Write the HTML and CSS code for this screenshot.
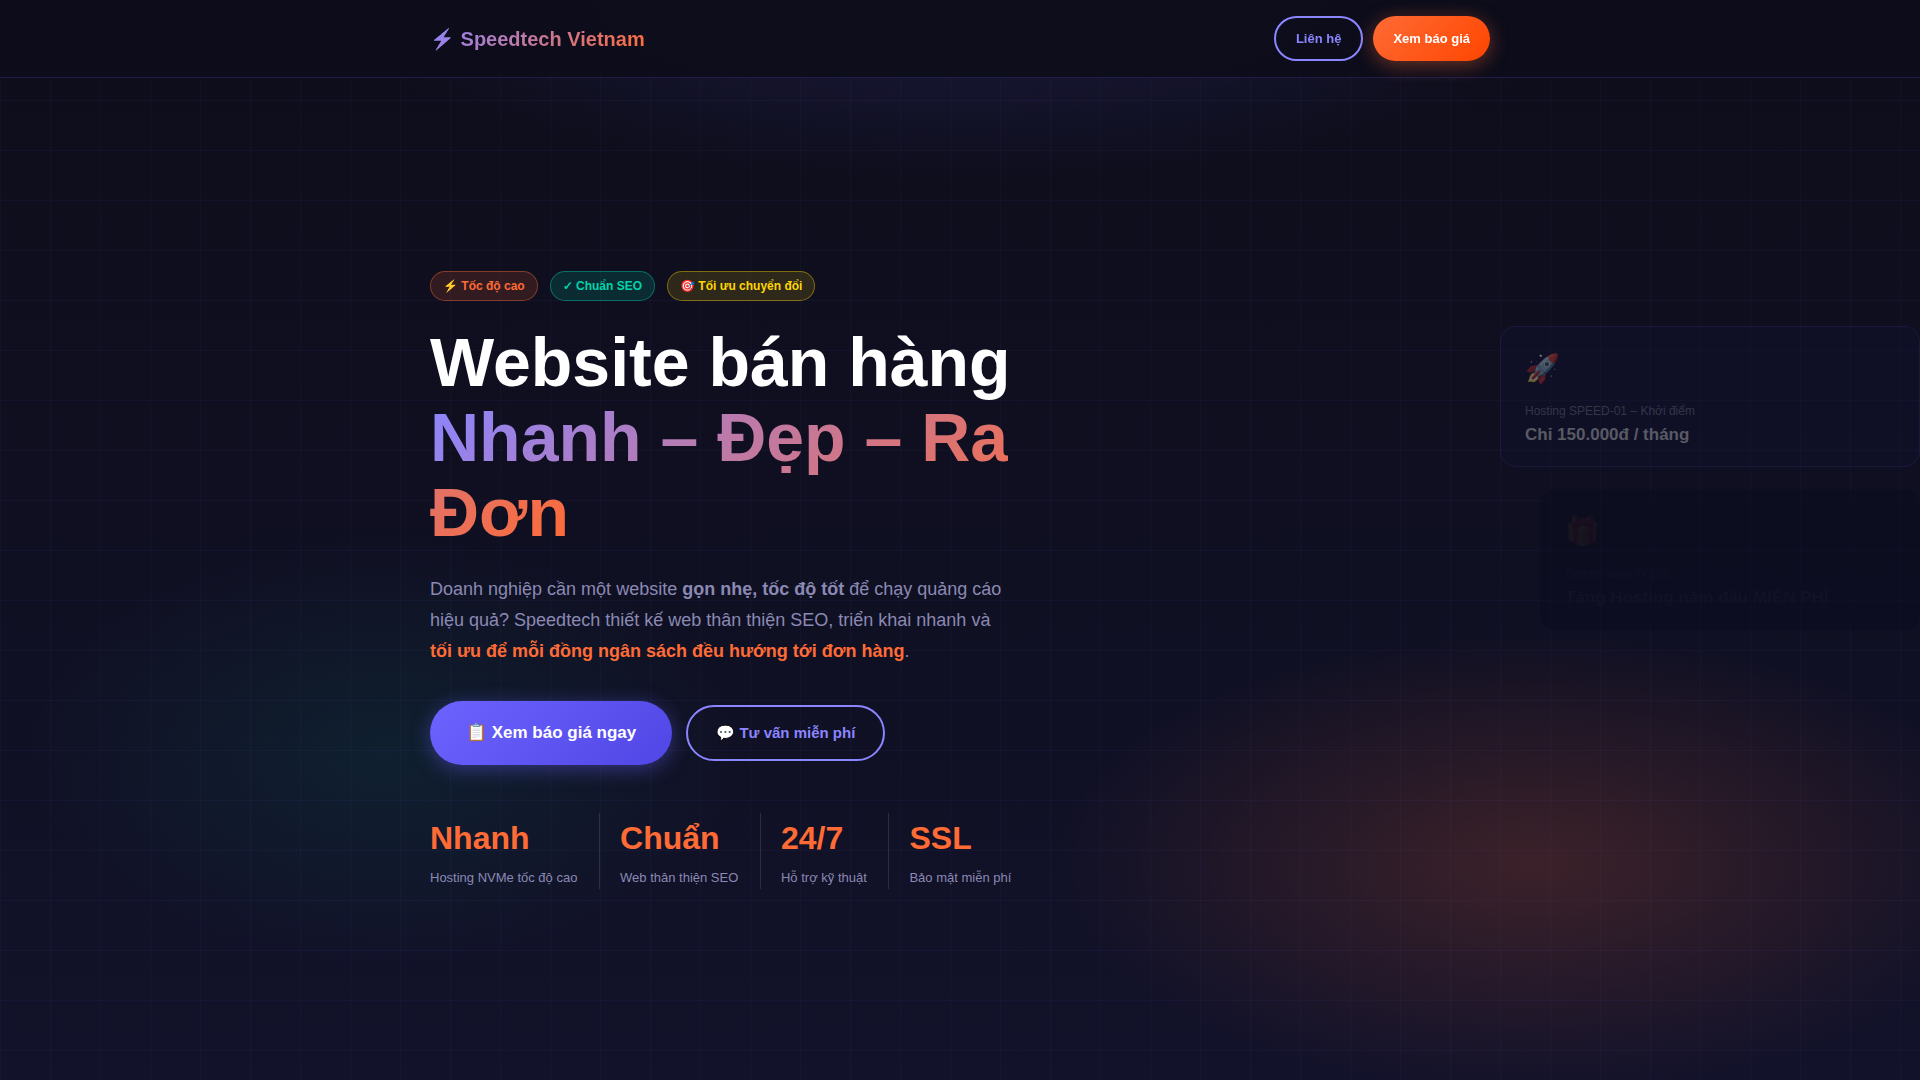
FILE: index.html
```
<!DOCTYPE html>
<html lang="vi">
<head>
  <meta charset="UTF-8">
  <meta name="viewport" content="width=device-width, initial-scale=1.0">
  <title>Speedtech Vietnam</title>
  <link rel="stylesheet" href="styles.css">
</head>
<body>
  <header class="header">
    <div class="container header-inner">
      <a href="#" class="logo">⚡ Speedtech Vietnam</a>
      <nav class="header-cta">
        <a href="#contact" class="btn btn-outline btn-sm">Liên hệ</a>
        <a href="#pricing" class="btn btn-orange btn-sm">Xem báo giá</a>
      </nav>
    </div>
  </header>

  <section class="hero">
    <div class="container hero-grid">
      <div class="hero-content">
        <div class="badges">
          <span class="badge badge-orange">⚡ Tốc độ cao</span>
          <span class="badge badge-green">✓ Chuẩn SEO</span>
          <span class="badge badge-yellow">🎯 Tối ưu chuyển đổi</span>
        </div>
        <h1>Website bán hàng <br><span class="gradient-text">Nhanh – Đẹp – Ra Đơn</span></h1>
        <p class="hero-desc">Doanh nghiệp cần một website <strong>gọn nhẹ, tốc độ tốt</strong> để chạy quảng cáo hiệu quả? Speedtech thiết kế web thân thiện SEO, triển khai nhanh và <strong class="highlight">tối ưu để mỗi đồng ngân sách đều hướng tới đơn hàng</strong>.</p>
        <div class="hero-buttons">
          <a href="#pricing" class="btn btn-primary btn-lg">📋 Xem báo giá ngay</a>
          <a href="#contact" class="btn btn-outline">💬 Tư vấn miễn phí</a>
        </div>
        <div class="stats">
          <div class="stat">
            <div class="stat-value">Nhanh</div>
            <div class="stat-label">Hosting NVMe tốc độ cao</div>
          </div>
          <div class="stat">
            <div class="stat-value">Chuẩn</div>
            <div class="stat-label">Web thân thiện SEO</div>
          </div>
          <div class="stat">
            <div class="stat-value">24/7</div>
            <div class="stat-label">Hỗ trợ kỹ thuật</div>
          </div>
          <div class="stat">
            <div class="stat-value">SSL</div>
            <div class="stat-label">Bảo mật miễn phí</div>
          </div>
        </div>
      </div>

      <div class="hero-visual">
        <div class="card">
          <div class="card-icon">🚀</div>
          <div class="card-label">Hosting SPEED-01 – Khởi điểm</div>
          <div class="card-value">Chỉ 150.000đ / tháng</div>
        </div>
        <div class="card card-second">
          <div class="card-icon">🎁</div>
          <div class="card-label">Combo Web từ 15tr</div>
          <div class="card-value">Tặng Hosting năm đầu MIỄN PHÍ</div>
        </div>
      </div>
    </div>
  </section>
</body>
</html>
```
FILE: styles.css
```
* {
  margin: 0;
  padding: 0;
  box-sizing: border-box;
}

body {
  font-family: "Liberation Sans", Arial, sans-serif;
  background: #0d0d1a;
  color: #fff;
  line-height: 1.6;
  overflow-x: hidden;
}

a {
  text-decoration: none;
}

.container {
  width: 100%;
  max-width: 1100px;
  margin: 0 auto;
  padding: 0 20px;
}

/* Header */
.header {
  position: fixed;
  top: 0;
  left: 0;
  right: 0;
  z-index: 10;
  padding: 16px 0;
  background: rgba(13, 13, 26, 0.95);
  border-bottom: 1px solid rgba(108, 99, 255, 0.2);
}

.header-inner {
  display: flex;
  align-items: center;
  justify-content: space-between;
}

.logo,
.gradient-text {
  background: linear-gradient(135deg, #8b85ff, #ff6b35);
  -webkit-background-clip: text;
  background-clip: text;
  color: transparent;
}

.logo {
  font-size: 20px;
  font-weight: bold;
}

.header-cta {
  display: flex;
  gap: 10px;
}

/* Buttons */
.btn {
  display: inline-flex;
  align-items: center;
  padding: 14px 28px;
  border-radius: 50px;
  font-size: 15px;
  font-weight: bold;
}

.btn-outline {
  border: 2px solid #8b85ff;
  color: #8b85ff;
}

.btn-orange {
  background: linear-gradient(135deg, #ff6b35, #ff4500);
  box-shadow: 0 4px 20px rgba(255, 107, 53, 0.4);
  color: #fff;
}

.btn-primary {
  background: linear-gradient(135deg, #6c63ff, #4f46e5);
  box-shadow: 0 4px 20px rgba(108, 99, 255, 0.4);
  color: #fff;
}

.btn-sm {
  padding: 10px 20px;
  font-size: 13px;
  line-height: 21px;
}

.btn-orange.btn-sm {
  padding: 12px 20px;
}

.btn-lg {
  padding: 18px 36px;
  font-size: 17px;
}

/* Hero */
.hero {
  display: flex;
  align-items: center;
  min-height: 100vh;
  padding-top: 80px;
  overflow: hidden;
  background:
    linear-gradient(rgba(108, 99, 255, 0.05) 1px, transparent 1px) 0 0 / 50px 50px,
    linear-gradient(90deg, rgba(108, 99, 255, 0.05) 1px, transparent 1px) 0 0 / 50px 50px,
    radial-gradient(ellipse 480px 230px at 80% 80%, rgba(255, 107, 53, 0.18), transparent),
    radial-gradient(ellipse 360px 220px at 20% 70%, rgba(0, 212, 170, 0.08), transparent),
    radial-gradient(ellipse 640px 180px at 50% 0%, rgba(108, 99, 255, 0.15), transparent),
    linear-gradient(180deg, #0d0d1a, #12122a);
}

.hero-grid {
  display: grid;
  grid-template-columns: 583px 420px;
  justify-content: space-between;
  align-items: center;
}

.badges {
  display: flex;
  gap: 12px;
  margin-bottom: 24px;
}

.badge {
  padding: 4px 12px;
  border: 1px solid;
  border-radius: 50px;
  font-size: 12px;
  font-weight: bold;
  line-height: 20px;
}

.badge-orange {
  background: rgba(255, 107, 53, 0.15);
  border-color: rgba(255, 107, 53, 0.4);
  color: #ff6b35;
}

.badge-green {
  background: rgba(0, 212, 170, 0.15);
  border-color: rgba(0, 212, 170, 0.4);
  color: #00d4aa;
}

.badge-yellow {
  background: rgba(255, 214, 0, 0.13);
  border-color: rgba(255, 214, 0, 0.4);
  color: #ffd600;
}

h1 {
  margin-bottom: 24px;
  font-size: 68px;
  line-height: 75px;
}

.hero-desc {
  margin-bottom: 34px;
  color: #8b89b3;
  font-size: 18px;
  line-height: 31px;
}

.highlight {
  color: #ff6b35;
}

.hero-buttons {
  display: flex;
  align-items: center;
  gap: 14px;
  margin-bottom: 48px;
}

.stats {
  display: flex;
}

.stat {
  flex: 1 0 auto;
  padding-right: 20px;
  margin-right: 20px;
  border-right: 1px solid rgba(255, 255, 255, 0.12);
  white-space: nowrap;
}

.stat:last-child {
  padding-right: 0;
  margin-right: 0;
  border-right: 0;
}

.stat-value {
  color: #ff6b35;
  font-size: 32px;
  font-weight: bold;
}

.stat-label {
  margin-top: 4px;
  color: #8b89b3;
  font-size: 13px;
}

/* Floating cards, still sliding in from the right */
.hero-visual {
  display: flex;
  flex-direction: column;
  align-self: start;
  gap: 22px;
  margin-top: 55px;
  transform: translateX(430px);
}

.card {
  padding: 24px 24px 18px;
  border: 1px solid rgba(108, 99, 255, 0.1);
  border-radius: 16px;
  background: rgba(16, 20, 50, 0.35);
}

.card-icon {
  margin-bottom: 14px;
  font-size: 28px;
  line-height: 36px;
  opacity: 0.4;
}

.card-label {
  color: #35354a;
  font-size: 12px;
  line-height: 20px;
}

.card-value {
  color: #5a5a66;
  font-size: 17px;
  font-weight: bold;
  line-height: 27px;
}

.card-second {
  margin-left: 40px;
  border-color: transparent;
  background: rgba(8, 10, 28, 0.4);
}

.card-second .card-icon {
  opacity: 0.05;
}

.card-second .card-label,
.card-second .card-value {
  color: #121226;
}
```
